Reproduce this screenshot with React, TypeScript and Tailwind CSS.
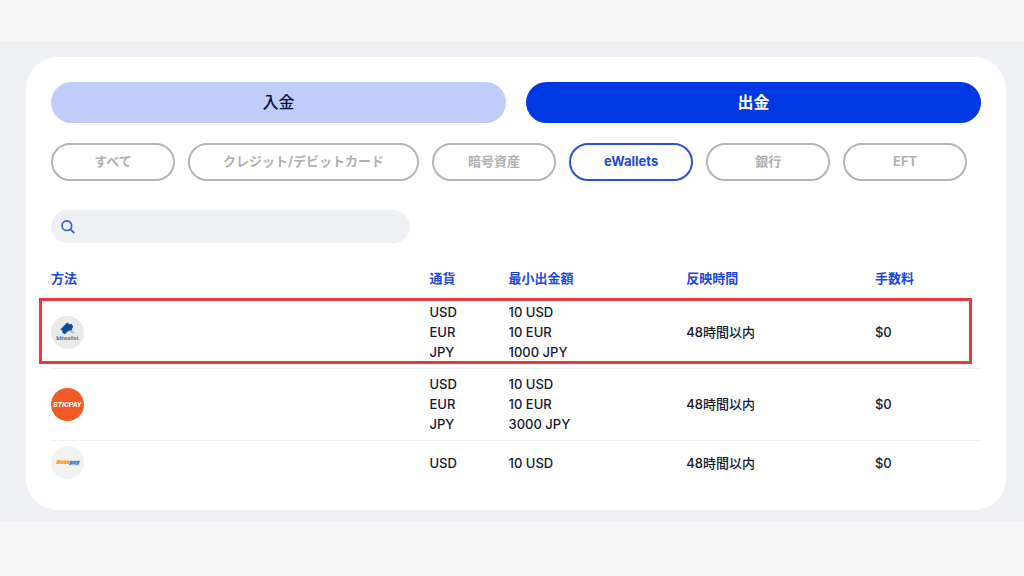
import { useState } from 'react';
import clsx from 'clsx';
import type { ReactNode } from 'react';

type Method = {
  id: string;
  logo: ReactNode;
  currencies: string[];
  minimums: string[];
  time: string;
  fee: string;
  highlighted?: boolean;
};

const TABS = ['入金', '出金'];

const FILTERS = ['すべて', 'クレジット/デビットカード', '暗号資産', 'eWallets', '銀行', 'EFT'];

const COLUMNS = [
  { label: '方法',       width: 'w-[40.7%]' },
  { label: '通貨',       width: 'w-[8.5%]' },
  { label: '最小出金額', width: 'w-[19.1%]' },
  { label: '反映時間',   width: 'w-[20.3%]' },
  { label: '手数料',     width: 'w-[11.4%]' },
];

function SearchIcon() {
  return (
    <svg viewBox="0 0 14 14" className="w-[14px] h-[14px] flex-shrink-0" fill="none" stroke="#3159d3">
      <circle cx="5.9" cy="5.7" r="4.8" strokeWidth="1.6" />
      <path d="m9.5 9.3 3.8 3.9" strokeWidth="1.8" />
    </svg>
  );
}

function BitwalletLogo() {
  return (
    <svg viewBox="0 0 33 33" className="block w-[33px] h-[33px]">
      <circle cx="16.5" cy="16.5" r="16.5" fill="#e9e9ea" />
      <path d="M9.4 13.4 16.2 6.6l2.2 1.7 2.4-.2 1.4 3-1.4 1.7.8 1.5-4 .4-3.6 3.6-3-1.7.8-1.7z" fill="#0f4a94" />
      <path d="M14.6 17.4c1.4-2.2 3.6-2.8 5.2-2 1 .6 2 .6 3.2.6-.6 1.2-1.6 1.4-2.4 1.2" fill="none" stroke="#62b5e5" strokeWidth="0.9" />
      <text x="16.5" y="24" textAnchor="middle" fontSize="5" fontWeight="700" fontFamily="'Open Sans', sans-serif">
        <tspan fill="#2b5f9e">bit</tspan>
        <tspan fill="#6e7782">wallet</tspan>
      </text>
    </svg>
  );
}

function SticpayLogo() {
  return (
    <svg viewBox="0 0 33 33" className="block w-[33px] h-[33px]">
      <circle cx="16.5" cy="16.5" r="16.5" fill="#f15a24" />
      <text x="16.3" y="19.3" textAnchor="middle" fontSize="7.4" fontWeight="800" fontStyle="italic" fill="#fff" fontFamily="Roboto, sans-serif">
        STICPAY
      </text>
    </svg>
  );
}

function BeeepayLogo() {
  return (
    <svg viewBox="0 0 33 33" className="block w-[33px] h-[33px]">
      <circle cx="16.5" cy="16.5" r="16.5" fill="#f2f2f3" />
      <path d="M6 13.8h12.6l-.8 3.6H5.6z" fill="#f8cf93" />
      <path d="M18.6 14.6h11l-1.6 4.6h-9.8z" fill="#a9bfe2" />
      <text x="5.6" y="17.9" fontSize="5.6" fontWeight="800" fontStyle="italic" fill="#f0992b" fontFamily="'Open Sans', sans-serif">
        Beee
      </text>
      <text x="18.4" y="18.2" fontSize="5.6" fontWeight="800" fontStyle="italic" fill="#4a74b8" fontFamily="'Open Sans', sans-serif">
        pay
      </text>
    </svg>
  );
}

const METHODS: Method[] = [
  {
    id: 'bitwallet',
    logo: <BitwalletLogo />,
    currencies: ['USD', 'EUR', 'JPY'],
    minimums: ['10 USD', '10 EUR', '1000 JPY'],
    time: '48時間以内',
    fee: '$0',
    highlighted: true,
  },
  {
    id: 'sticpay',
    logo: <SticpayLogo />,
    currencies: ['USD', 'EUR', 'JPY'],
    minimums: ['10 USD', '10 EUR', '3000 JPY'],
    time: '48時間以内',
    fee: '$0',
  },
  {
    id: 'beeepay',
    logo: <BeeepayLogo />,
    currencies: ['USD'],
    minimums: ['10 USD'],
    time: '48時間以内',
    fee: '$0',
  },
];

function Lines({ items }: { items: string[] }) {
  return (
    <>
      {items.map(item => (
        <div key={item}>{item}</div>
      ))}
    </>
  );
}

function MethodRow({ method }: { method: Method }) {
  return (
    <tr className="relative border-b border-[#eff1f4] last:border-b-0">
      <td className="pt-[5px] pb-[6px]">
        {method.logo}
        {method.highlighted && (
          <div className="absolute -left-3 right-[9px] top-px bottom-1 border-[3px] border-[#e83a3c] pointer-events-none" />
        )}
      </td>
      <td className="pt-[5px] pb-[6px]"><Lines items={method.currencies} /></td>
      <td className="pt-[5px] pb-[6px]"><Lines items={method.minimums} /></td>
      <td className="pt-[5px] pb-[6px]">{method.time}</td>
      <td className="pt-[5px] pb-[6px]">{method.fee}</td>
    </tr>
  );
}

export default function App() {
  const [tab, setTab] = useState('出金');
  const [filter, setFilter] = useState('eWallets');
  const [query, setQuery] = useState('');

  return (
    <div className="min-h-screen bg-[#f7f7f7] py-[41px] font-[Inter,'Noto_Sans_CJK_JP',sans-serif] text-[13px] leading-5 text-[#14182f]">
      <main className="bg-[#eef0f4] pt-4 pb-3 pl-[26px] pr-[18px]">
        <section className="bg-white rounded-[32px] p-[25px]">
          {/* Deposit / withdrawal */}
          <div className="grid grid-cols-2 gap-5">
            {TABS.map(label => (
              <button
                key={label}
                onClick={() => setTab(label)}
                className={clsx(
                  'h-[41px] pb-0.5 rounded-full text-base',
                  tab === label ? 'bg-[#0039e3] text-white font-bold' : 'bg-[#bfcdf8] text-[#0b1238] font-medium',
                )}
              >
                {label}
              </button>
            ))}
          </div>

          {/* Category filters */}
          <div className="flex flex-wrap gap-[13px] mt-5">
            {FILTERS.map(label => (
              <button
                key={label}
                onClick={() => setFilter(label)}
                className={clsx(
                  'h-[38px] min-w-[124px] px-[33px] pb-0.5 rounded-full border-2 font-bold',
                  filter === label ? 'border-[#2a52d2] text-[#1f49d0]' : 'border-[#b5b5b6] text-[#b0b0b2]',
                )}
              >
                {label}
              </button>
            ))}
          </div>

          <div className="flex items-center gap-2 mt-[29px] w-[359px] max-w-full h-[33px] px-[10px] rounded-full bg-[#eef0f4]">
            <SearchIcon />
            <input
              type="search"
              aria-label="検索"
              value={query}
              onChange={e => setQuery(e.target.value)}
              className="flex-1 min-w-0 bg-transparent outline-none"
            />
          </div>

          <table className="w-full table-fixed text-left font-medium">
            <thead>
              <tr>
                {COLUMNS.map(col => (
                  <th key={col.label} className={clsx('pt-[25px] pb-[9px] font-bold text-[#1c48d8]', col.width)}>
                    {col.label}
                  </th>
                ))}
              </tr>
            </thead>
            <tbody>
              {METHODS.filter(m => m.id.includes(query.toLowerCase())).map(m => (
                <MethodRow key={m.id} method={m} />
              ))}
            </tbody>
          </table>
        </section>
      </main>
    </div>
  );
}
